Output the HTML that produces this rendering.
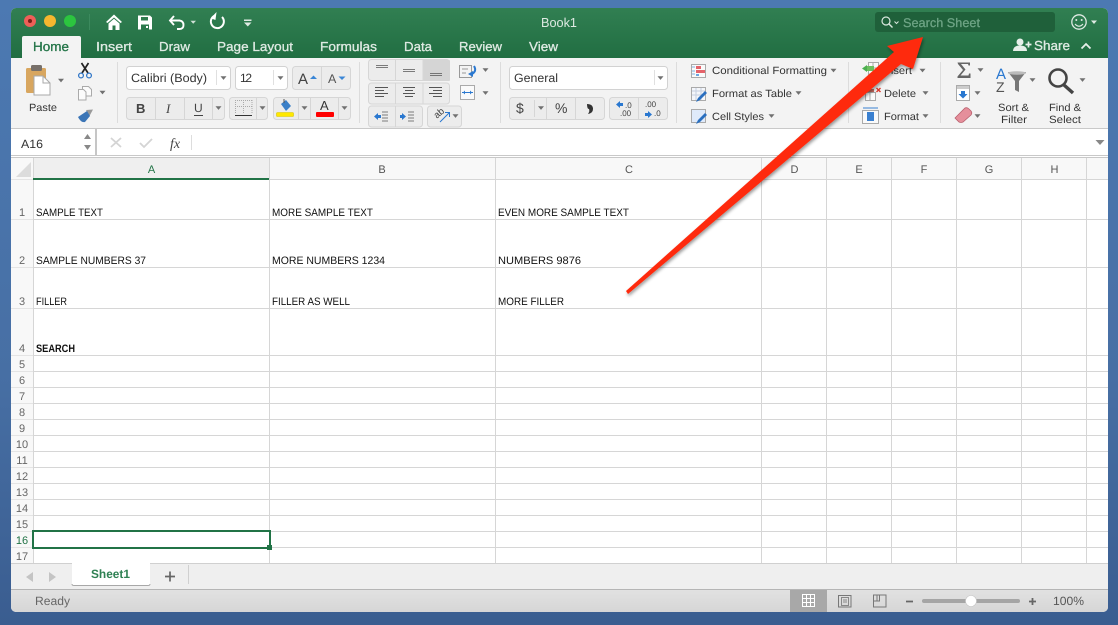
<!DOCTYPE html>
<html><head><meta charset="utf-8"><title>Book1</title>
<style>
html,body{margin:0;padding:0;width:1118px;height:625px;overflow:hidden;background:#44709f}
svg{display:block}
text{font-family:"Liberation Sans",sans-serif;font-size:11px;fill:#3a3a3a;text-rendering:geometricPrecision}
.t{font-size:13px;fill:#dfeae3;stroke:#dfeae3;stroke-width:.3px}
.r{font-size:10.5px;fill:#333}
.c{font-size:10.8px;fill:#111}
.n{font-size:11px;fill:#666;text-anchor:middle}
.h{font-size:11px;fill:#555;text-anchor:middle}
</style></head><body>
<svg width="1118" height="625" viewBox="0 0 1118 625" xmlns="http://www.w3.org/2000/svg">
<defs>
<linearGradient id="bg" x1="0" y1="0" x2="0" y2="1"><stop offset="0" stop-color="#4c79b2"/><stop offset=".6" stop-color="#476fa4"/><stop offset="1" stop-color="#3a5d90"/></linearGradient>
<linearGradient id="gr" x1="0" y1="0" x2="0" y2="1"><stop offset="0" stop-color="#317f52"/><stop offset="1" stop-color="#216e42"/></linearGradient>
<linearGradient id="st" x1="0" y1="0" x2="0" y2="1"><stop offset="0" stop-color="#e2e2e2"/><stop offset="1" stop-color="#d6d6d6"/></linearGradient>
<clipPath id="win"><rect x="11" y="8" width="1097" height="604" rx="5"/></clipPath>
<filter id="sh" x="-10%" y="-10%" width="120%" height="120%"><feDropShadow dx="1" dy="2" stdDeviation="1.5" flood-color="#000" flood-opacity=".4"/></filter>
<path id="k" d="M-3-1.700H3L0 1.900z" fill="#707070"/>
</defs>
<rect width="1118" height="625" fill="url(#bg)"/>
<g clip-path="url(#win)">
<rect x="11" y="8" width="1097" height="604" fill="#fff"/>
<rect x="11" y="8" width="1097" height="50" fill="url(#gr)"/>
<rect x="11" y="58" width="1097" height="70" fill="#f3f3f3"/>
<rect x="11" y="128" width="1097" height="1" fill="#c9c9c9"/>
<!-- title row -->
<circle cx="30" cy="21" r="6" fill="#ee5f58"/><circle cx="30" cy="21" r="2" fill="#7a1d17"/>
<circle cx="50" cy="21" r="6" fill="#f6b62f"/><circle cx="70" cy="21" r="6" fill="#2cc53f"/>
<rect x="89" y="14" width="1" height="16" fill="#3c8a5e"/>
<path d="M106 22 114 14.500 122 22l-1.500 1L114 17.500 107.500 23zM108.500 23.500 114 18.800l5.500 4.700V30h-4v-4.500h-3V30h-4z" fill="#fff"/>
<path d="M138 15.500h12l2 2V29.500h-14zM141 17v3.500h7V17zM141 24.500v5h8v-5z" fill="#fff" fill-rule="evenodd"/><rect x="146" y="26" width="2" height="2" fill="#fff"/>
<path d="M174 16 170 20.500l4 4.500M170.500 20.500H179.500q4 .5 4 4.500t-4 4H177" fill="none" stroke="#fff" stroke-width="1.900"/>
<path d="M190.500 20.800h5.500L193.200 23.800z" fill="#cfe0d6"/>
<path d="M215 15.500A6.500 6.500 0 1 0 222 17" fill="none" stroke="#fff" stroke-width="2"/><path d="M216 12v8l-5-1z" fill="#fff" transform="rotate(8 216 16)"/>
<path d="M244 19.500h7.500v1.500H244zM244 22.500h7.500L247.800 26.500z" fill="#dfeae3"/>
<text class="t" x="541" y="27" textLength="36" lengthAdjust="spacingAndGlyphs" style="stroke:none">Book1</text>
<rect x="875" y="12" width="180" height="20" rx="3" fill="#1f603a"/>
<circle cx="886" cy="21" r="4" fill="none" stroke="#d9e7de" stroke-width="1.200"/><path d="M889 24l3.500 3.500" stroke="#d9e7de" stroke-width="1.400"/><path d="M894.500 21.500l2 2 2-2" fill="none" stroke="#d9e7de" stroke-width="1"/>
<text x="903" y="27" textLength="77" lengthAdjust="spacingAndGlyphs" style="font-size:12.500px;fill:#6fa586;stroke:#6fa586;stroke-width:.25px">Search Sheet</text>
<circle cx="1079" cy="22" r="7.200" fill="none" stroke="#dfeae3" stroke-width="1.300"/><circle cx="1076.300" cy="20" r="1" fill="#dfeae3"/><circle cx="1081.700" cy="20" r="1" fill="#dfeae3"/><path d="M1075 24q4 4.500 8 0" fill="none" stroke="#dfeae3" stroke-width="1.200"/>
<path d="M1091 20.500h6l-3 3.500z" fill="#dfeae3"/>
<circle cx="1020" cy="42" r="3.500" fill="#e6efe9"/><path d="M1013 51q0-5.500 7-5.500t7 5.500z" fill="#e6efe9"/><path d="M1025.500 44.500h6M1028.500 41.500v6" stroke="#e6efe9" stroke-width="1.700"/>
<text class="t" x="1034" y="50" textLength="36" lengthAdjust="spacingAndGlyphs">Share</text>
<path d="M1081.500 48.500l4.500-4.500 4.500 4.500" fill="none" stroke="#e6efe9" stroke-width="1.800"/>
<!-- tabs -->
<path d="M22 58V38q0-2 2-2h55q2 0 2 2v20z" fill="#f3f3f3"/>
<text class="t" x="33" y="51" textLength="36" lengthAdjust="spacingAndGlyphs" style="fill:#217346;stroke:#217346">Home</text>
<text class="t" x="96" y="51" textLength="36" lengthAdjust="spacingAndGlyphs">Insert</text>
<text class="t" x="159" y="51" textLength="31" lengthAdjust="spacingAndGlyphs">Draw</text>
<text class="t" x="217" y="51" textLength="76" lengthAdjust="spacingAndGlyphs">Page Layout</text>
<text class="t" x="320" y="51" textLength="57" lengthAdjust="spacingAndGlyphs">Formulas</text>
<text class="t" x="404" y="51" textLength="28" lengthAdjust="spacingAndGlyphs">Data</text>
<text class="t" x="459" y="51" textLength="43" lengthAdjust="spacingAndGlyphs">Review</text>
<text class="t" x="529" y="51" textLength="29" lengthAdjust="spacingAndGlyphs">View</text>
<!-- dividers -->
<path d="M117.500 62v61M359.500 62v61M500.500 62v61M676.500 62v61M848.500 62v61M940.500 62v61" stroke="#dcdcdc"/>
<!-- clipboard group -->
<rect x="26" y="68" width="20" height="25" rx="1.500" fill="#d8a65f"/><rect x="31" y="65" width="11" height="6" rx="1.500" fill="#77706a"/>
<path d="M34 76h9l7 7v12H34z" fill="#fff" stroke="#a9a9a9"/><path d="M43 76v7h7" fill="none" stroke="#a9a9a9"/>
<text class="r" x="29" y="111" textLength="28" lengthAdjust="spacingAndGlyphs">Paste</text>
<use href="#k" x="61" y="80.500"/>
<path d="M81.500 63 88 73M88.500 63 82 73" stroke="#222" stroke-width="1.700"/><circle cx="81" cy="75.500" r="2.400" fill="none" stroke="#3478c8" stroke-width="1.300"/><circle cx="89" cy="75.500" r="2.400" fill="none" stroke="#3478c8" stroke-width="1.300"/>
<path d="M82.500 86.500h6l3 3v6.500h-9z" fill="#fbfbfb" stroke="#aaa"/><path d="M78.500 89.500h5l2.500 2.500v8h-7.500z" fill="#fbfbfb" stroke="#aaa"/>
<use href="#k" x="102.500" y="92.500"/>
<path d="M86 110l7-.500-3.500 6.500z" fill="#9a9a9a"/><path d="M78 117l9-6 3 5-5 6q-4 1-7-5z" fill="#3b75b6"/>
<!-- font -->
<rect x="126.500" y="66.500" width="104" height="23" rx="3" fill="#fff" stroke="#d2d2d2"/><path d="M216.500 70v15" stroke="#e0e0e0"/>
<text x="131" y="82" textLength="76" lengthAdjust="spacingAndGlyphs" style="font-size:12px;fill:#333">Calibri (Body)</text><use href="#k" x="223.500" y="78"/>
<rect x="235.500" y="66.500" width="52" height="23" rx="3" fill="#fff" stroke="#d2d2d2"/><path d="M273.500 70v15" stroke="#e0e0e0"/>
<text x="240" y="82" style="font-size:12px;fill:#333" textLength="12">12</text><use href="#k" x="280.500" y="78"/>
<rect x="292.500" y="66.500" width="58" height="23" rx="3" fill="#ececec" stroke="#d6d6d6"/><path d="M321.500 67v22" stroke="#d6d6d6"/>
<text x="298" y="84" style="font-size:15px;fill:#444">A</text><path d="M310 79l3.500-3.500 3.500 3.500z" fill="#3a86d6"/>
<text x="328" y="83" style="font-size:12.500px;fill:#555">A</text><path d="M338.500 76.500h7l-3.500 3.500z" fill="#3a86d6"/>
<rect x="126.500" y="97.500" width="98" height="22" rx="3" fill="#ececec" stroke="#d6d6d6"/><path d="M155.500 98v21M184.500 98v21M212.500 98v21" stroke="#d6d6d6"/>
<text x="136" y="113" style="font-size:13px;font-weight:bold;fill:#444">B</text>
<text x="166" y="113" style="font-size:13px;font-style:italic;font-family:'Liberation Serif',serif;fill:#444">I</text>
<text x="194" y="112" style="font-size:12px;fill:#444">U</text><path d="M194 115.500h9" stroke="#444"/>
<use href="#k" x="218.500" y="108"/>
<rect x="229.500" y="97.500" width="38" height="22" rx="3" fill="#ececec" stroke="#d6d6d6"/><path d="M256.500 98v21" stroke="#d6d6d6"/>
<path d="M235.500 100v13M243.500 100v13M252 100v13M235 100.500h17M235 106.500h17" stroke="#aaa" stroke-dasharray="1 1" fill="none"/><path d="M235 115.500h17" stroke="#333"/><use href="#k" x="262.500" y="108"/>
<rect x="273.500" y="97.500" width="77" height="22" rx="3" fill="#ececec" stroke="#d6d6d6"/><path d="M298.500 98v21M310.500 98v21M338.500 98v21" stroke="#d6d6d6"/>
<path d="M281 104l5-4 5 6-5 5z" fill="#3b80c8"/><path d="M284 103v-4" stroke="#555"/><rect x="276.500" y="112.500" width="17" height="4" rx="1" fill="#ffe800" stroke="#d8c500" stroke-width=".6"/>
<use href="#k" x="304.500" y="108"/>
<text x="320" y="110" style="font-size:13px;fill:#333">A</text><rect x="316" y="112" width="18" height="5" rx="1" fill="#f00"/><use href="#k" x="344.500" y="108"/>
<!-- alignment -->
<rect x="368.500" y="59.500" width="81" height="21" rx="3" fill="#ececec" stroke="#d6d6d6"/><path d="M423 60h26q1 0 1 1v19q0 1-1 1h-26z" fill="#d5d5d5"/><path d="M395.500 60v21M423 60v21" stroke="#d6d6d6"/>
<path d="M376 65.500h12M376 67.500h12M403 69.500h12M403 71.500h12M430 73.500h12M430 75.500h12" stroke="#555" stroke-width=".8"/>
<rect x="368.500" y="83" width="81" height="21" rx="3" fill="#ececec" stroke="#d6d6d6"/><path d="M395.500 83v21M423 83v21" stroke="#d6d6d6"/>
<path d="M375 87.500h13M375 90.500h9M375 93.500h13M375 96.500h9M403 87.500h12M405 90.500h8M403 93.500h12M405 96.500h8M429 87.500h13M433 90.500h9M429 93.500h13M433 96.500h9" stroke="#555" stroke-width=".9"/>
<rect x="368.500" y="106" width="54" height="21" rx="3" fill="#ececec" stroke="#d6d6d6"/><path d="M395.500 106v21" stroke="#d6d6d6"/>
<path d="M374 116.500l4-3.500v2h3v3h-3v2z" fill="#2a78d0"/><path d="M400 115h2v-2l4 3.500-4 3.500v-2h-2z" fill="#2a78d0"/><path d="M382 112h6M382 115h6M382 118h6M382 121h6M408 112h6M408 115h6M408 118h6M408 121h6" stroke="#555" stroke-width=".8"/>
<rect x="427.500" y="106" width="34" height="21" rx="3" fill="#ececec" stroke="#d6d6d6"/>
<text x="434" y="117" transform="rotate(-40 438 114)" style="font-size:9.500px;fill:#444">ab</text><path d="M440 122l9-9M445 112.500h4.500v4.500" fill="none" stroke="#2a78d0"/><use href="#k" x="455.500" y="116"/>
<path d="M459.500 65.500h12v12h-12zM462 69h6M462 73h4" fill="none" stroke="#999"/><path d="M474 66q3 5-2 8" fill="none" stroke="#2a78d0" stroke-width="2"/><path d="M468 74l5-3v6z" fill="#2a78d0"/>
<use href="#k" x="485.500" y="70"/>
<rect x="460.500" y="85.500" width="14" height="14" fill="#fafafa" stroke="#aaa"/><path d="M462 92.500h11" stroke="#2a78d0"/><path d="M463 92.500l2-2v4zM472 92.500l-2-2v4z" fill="#2a78d0"/>
<use href="#k" x="485.500" y="93"/>
<!-- number -->
<rect x="509.500" y="66.500" width="158" height="23" rx="3" fill="#fff" stroke="#d2d2d2"/><path d="M654.500 70v15" stroke="#e0e0e0"/>
<text x="514" y="82" textLength="44" lengthAdjust="spacingAndGlyphs" style="font-size:12px;fill:#333">General</text><use href="#k" x="660.500" y="78"/>
<rect x="509.500" y="97.500" width="95" height="22" rx="3" fill="#ececec" stroke="#d6d6d6"/><path d="M534.500 100v17M546.500 98v21M575.500 98v21" stroke="#d6d6d6"/>
<text x="516" y="113" style="font-size:14px;fill:#444">$</text><use href="#k" x="541" y="108"/><text x="555" y="113" style="font-size:14px;fill:#444">%</text>
<path d="M587 104q6 0 6 5 0 4-5 5 2-3 1-5-2 0-2-5z" fill="#333"/>
<rect x="609.500" y="97.500" width="58" height="22" rx="3" fill="#ececec" stroke="#d6d6d6"/><path d="M638.500 98v21" stroke="#d6d6d6"/>
<path d="M616 104.500l4-3.500v2h3v3h-3v2z" fill="#2a78d0"/><text x="625" y="108" style="font-size:8px;fill:#444">.0</text><text x="620" y="116" style="font-size:8px;fill:#444">.00</text>
<text x="645" y="107" style="font-size:8px;fill:#444">.00</text><path d="M645 113h3v-2l4 3.500-4 3.500v-2h-3z" fill="#2a78d0"/><text x="654" y="116" style="font-size:8px;fill:#444">.0</text>
<!-- styles -->
<rect x="691.500" y="64.500" width="14" height="13" fill="#fafafa" stroke="#aaa"/><rect x="696" y="66" width="5" height="3" fill="#e5636a"/><rect x="696" y="70" width="9" height="3" fill="#e5636a"/><rect x="696" y="74" width="3" height="2" fill="#6ca6e0"/><path d="M692 67h3M692 71h3M692 74h3" stroke="#7fb0e0"/>
<text class="r" x="712" y="74" textLength="115" lengthAdjust="spacingAndGlyphs">Conditional Formatting</text><use href="#k" x="833.500" y="70.500"/>
<rect x="691.500" y="87.500" width="14" height="13" fill="#f4f6fa" stroke="#aaa"/><path d="M692 91h13M692 95h13M696 88v12M701 88v12" stroke="#c5cfe0"/><path d="M696 102l2-4 7-7 2 2-7 7z" fill="#2a6fbf"/>
<text class="r" x="712" y="97" textLength="80" lengthAdjust="spacingAndGlyphs">Format as Table</text><use href="#k" x="798.500" y="93"/>
<rect x="691.500" y="109.500" width="14" height="13" fill="#dfeafa" stroke="#aaa"/><path d="M696 124l2-4 7-7 2 2-7 7z" fill="#2a6fbf"/>
<text class="r" x="712" y="120" textLength="52" lengthAdjust="spacingAndGlyphs">Cell Styles</text><use href="#k" x="771.500" y="116"/>
<!-- cells -->
<path d="M868.500 62.500h10v18h-10zM868 68h10M868 74h10M873 62v18" fill="#fafafa" stroke="#aaa"/><rect x="866" y="66" width="8" height="5" fill="#6cbf5f"/><path d="M862 68.500l5-3.500v7z" fill="#4caf50"/>
<text class="r" x="884" y="74" textLength="28" lengthAdjust="spacingAndGlyphs">Insert</text><use href="#k" x="922.500" y="70.500"/>
<path d="M865.500 92.500h10v8h-10zM870 92v8" fill="#fafafa" stroke="#aaa"/><rect x="866" y="89" width="8" height="3" fill="#c96a5e"/><path d="M876.500 88l4 4M880.500 88l-4 4" stroke="#d9382c" stroke-width="1.400"/>
<text class="r" x="884" y="97" textLength="32" lengthAdjust="spacingAndGlyphs">Delete</text><use href="#k" x="925.500" y="93"/>
<rect x="862.500" y="110.500" width="16" height="13" fill="#fafafa" stroke="#aaa"/><rect x="867" y="112" width="7" height="9" fill="#3a80d0"/><path d="M863 108h15" stroke="#3a80d0"/>
<text class="r" x="884" y="120" textLength="35" lengthAdjust="spacingAndGlyphs">Format</text><use href="#k" x="925.500" y="116"/>
<!-- editing -->
<path d="M957.500 62.500H970v3h-1.500l-.5-1.500h-7l4.500 5.500-5 6h8l.5-2h1.500V78h-13v-1.500l5.500-6.500-5-6z" fill="#666"/><use href="#k" x="980.500" y="70"/>
<rect x="956.500" y="85.500" width="13" height="15" fill="#fff" stroke="#aaa"/><rect x="957" y="86" width="12" height="3" fill="#ccc"/><path d="M961 91h4v3h2.500L963 98.500 958.500 94H961z" fill="#2a78d0"/><use href="#k" x="977.500" y="93"/>
<path d="M955 118l10-10q2-1 4 1l2 2q1.500 2 0 4l-8 7q-2 1-4 0z" fill="#e58f9b" stroke="#b9606e" stroke-width=".8"/><use href="#k" x="977.500" y="116"/>
<text x="996" y="79" style="font-size:15px;fill:#2a78d0">A</text><text x="996" y="92" style="font-size:14px;fill:#555">Z</text>
<path d="M1008 72h18l-7 9v11l-4-2v-9z" fill="#777"/><ellipse cx="1017" cy="73" rx="9" ry="1.800" fill="#bbb"/><use href="#k" x="1032.500" y="80"/>
<text class="r" x="998" y="111" textLength="31" lengthAdjust="spacingAndGlyphs">Sort &amp;</text><text class="r" x="1001" y="123" textLength="26" lengthAdjust="spacingAndGlyphs">Filter</text>
<circle cx="1058" cy="78" r="8.500" fill="none" stroke="#444" stroke-width="2.600"/><path d="M1064 85l9 8" stroke="#444" stroke-width="3.400"/><use href="#k" x="1082.500" y="80"/>
<text class="r" x="1049" y="111" textLength="32" lengthAdjust="spacingAndGlyphs">Find &amp;</text><text class="r" x="1049" y="123" textLength="32" lengthAdjust="spacingAndGlyphs">Select</text>
<!-- formula bar -->
<rect x="95" y="129" width="2" height="26" fill="#c6c6c6"/>
<text x="21" y="148" textLength="22" lengthAdjust="spacingAndGlyphs" style="font-size:12px;fill:#333">A16</text>
<path d="M84 139l3.500-5 3.500 5zM84 145h7l-3.500 5z" fill="#888"/>
<path d="M111 138l10 9M121 138l-10 9" stroke="#d4d4d4" stroke-width="1.800"/><path d="M140 143l4 4 8-8" fill="none" stroke="#d4d4d4" stroke-width="1.800"/>
<text x="170" y="148" style="font-family:'Liberation Serif',serif;font-style:italic;font-size:14px;fill:#444">fx</text>
<path d="M191.500 135v15" stroke="#ddd"/>
<path d="M1095.500 140h9l-4.500 5z" fill="#888"/>
<rect x="11" y="155" width="1097" height="1" fill="#c8c8c8"/><rect x="11" y="157" width="1097" height="1" fill="#c8c8c8"/>
<!-- headers -->
<rect x="11" y="158" width="1097" height="21" fill="#f8f8f8"/><rect x="33" y="158" width="236" height="20" fill="#efefef"/>
<rect x="11" y="179" width="22" height="384" fill="#f8f8f8"/>
<path d="M31 162v15H16z" fill="#dcdcdc"/>
<text class="h" x="151.500" y="173" style="fill:#217346">A</text><text class="h" x="382" y="173">B</text><text class="h" x="629" y="173">C</text><text class="h" x="794.500" y="173">D</text><text class="h" x="859" y="173">E</text><text class="h" x="924" y="173">F</text><text class="h" x="989" y="173">G</text><text class="h" x="1054.500" y="173">H</text>
<!-- grid -->
<path d="M33.500 158V563M269.500 158V563M495.500 158V563M761.500 158V563M826.500 158V563M891.500 158V563M956.500 158V563M1021.500 158V563M1086.500 158V563" stroke="#d6d6d6"/>
<path d="M33 179.500H1108M33 219.500H1108M33 267.500H1108M33 308.500H1108M33 355.500H1108M33 371.500H1108M33 387.500H1108M33 403.500H1108M33 419.500H1108M33 435.500H1108M33 451.500H1108M33 467.500H1108M33 483.500H1108M33 499.500H1108M33 515.500H1108M33 531.500H1108M33 547.500H1108" stroke="#d6d6d6"/>
<path d="M11 179.500H33M11 219.500H33M11 267.500H33M11 308.500H33M11 355.500H33M11 371.500H33M11 387.500H33M11 403.500H33M11 419.500H33M11 435.500H33M11 451.500H33M11 467.500H33M11 483.500H33M11 499.500H33M11 515.500H33M11 531.500H33M11 547.500H33" stroke="#e4e4e4"/>
<rect x="33" y="178" width="236" height="2" fill="#217346"/>
<text class="n" x="22" y="216">1</text><text class="n" x="22" y="264">2</text><text class="n" x="22" y="305">3</text><text class="n" x="22" y="352">4</text><text class="n" x="22" y="368">5</text><text class="n" x="22" y="384">6</text><text class="n" x="22" y="400">7</text><text class="n" x="22" y="416">8</text><text class="n" x="22" y="432">9</text><text class="n" x="22" y="448">10</text><text class="n" x="22" y="464">11</text><text class="n" x="22" y="480">12</text><text class="n" x="22" y="496">13</text><text class="n" x="22" y="512">14</text><text class="n" x="22" y="528">15</text><text class="n" x="22" y="544" style="fill:#217346">16</text><text class="n" x="22" y="560">17</text>
<text class="c" x="36" y="216" textLength="67" lengthAdjust="spacingAndGlyphs">SAMPLE TEXT</text>
<text class="c" x="272" y="216" textLength="101" lengthAdjust="spacingAndGlyphs">MORE SAMPLE TEXT</text>
<text class="c" x="498" y="216" textLength="131" lengthAdjust="spacingAndGlyphs">EVEN MORE SAMPLE TEXT</text>
<text class="c" x="36" y="264" textLength="110" lengthAdjust="spacingAndGlyphs">SAMPLE NUMBERS 37</text>
<text class="c" x="272" y="264" textLength="113" lengthAdjust="spacingAndGlyphs">MORE NUMBERS 1234</text>
<text class="c" x="498" y="264" textLength="83" lengthAdjust="spacingAndGlyphs">NUMBERS 9876</text>
<text class="c" x="36" y="305" textLength="31" lengthAdjust="spacingAndGlyphs">FILLER</text>
<text class="c" x="272" y="305" textLength="78" lengthAdjust="spacingAndGlyphs">FILLER AS WELL</text>
<text class="c" x="498" y="305" textLength="66" lengthAdjust="spacingAndGlyphs">MORE FILLER</text>
<text class="c" x="36" y="352" textLength="39" lengthAdjust="spacingAndGlyphs" style="font-weight:bold">SEARCH</text>
<rect x="33" y="531" width="237" height="17" fill="#fff" stroke="#217346" stroke-width="2"/><rect x="267" y="545" width="5" height="5" fill="#217346"/>
<!-- sheet tabs -->
<rect x="11" y="563" width="1097" height="26" fill="#efefef"/><rect x="11" y="563" width="1097" height="1" fill="#d0d0d0"/>
<path d="M33 572v10l-7-5zM49 572v10l7-5z" fill="#c4c4c4"/>
<path d="M72 563h78v20q0 2-2 2H74q-2 0-2-2z" fill="#fff"/><path d="M72 584q0 1.500 2 1.500h74q2 0 2-1.500" fill="none" stroke="#a8a8a8"/>
<text x="91" y="578" textLength="39" lengthAdjust="spacingAndGlyphs" style="font-size:12px;font-weight:bold;fill:#2f8153">Sheet1</text>
<path d="M165 576.500h10M170 571.500v10" stroke="#666" stroke-width="1.700"/><path d="M188.500 565v19" stroke="#d0d0d0"/>
<!-- status -->
<rect x="11" y="589" width="1097" height="23" fill="url(#st)"/><rect x="11" y="589" width="1097" height="1" fill="#b5b5b5"/>
<text x="35" y="605" textLength="35" lengthAdjust="spacingAndGlyphs" style="font-size:12px;fill:#666">Ready</text>
<rect x="790" y="590" width="37" height="22" fill="#a8a8a8"/>
<path d="M802.500 594.500h12v12h-12zM806.500 594v13M810.500 594v13M802 598.500h13M802 602.500h13" fill="none" stroke="#fff"/>
<path d="M838.500 595.500h12.500v11.500h-12.500z" fill="none" stroke="#777"/><path d="M841.500 597.500h7v8h-7zM843 600h4M843 602h4" fill="none" stroke="#888"/>
<path d="M873.500 595h12.500v12h-12.500zM877 595v6h2.500v-6M873 601h5" fill="none" stroke="#777"/>
<path d="M906 601.500h7M1029 601.500h7M1032.500 598v7" stroke="#666" stroke-width="1.800"/>
<rect x="922" y="599" width="98" height="4" rx="2" fill="#a5a5a5"/><circle cx="971" cy="601" r="5.500" fill="#fff" stroke="#c8c8c8" stroke-width=".6"/>
<text x="1053" y="605" textLength="31" lengthAdjust="spacingAndGlyphs" style="font-size:12px;fill:#555">100%</text>
</g>
<!-- arrow -->
<path d="M626 291 894 52 887 46 923 37 913 69 901 64 628 294z" fill="#fe2a0a" filter="url(#sh)"/>
</svg>
</body></html>
